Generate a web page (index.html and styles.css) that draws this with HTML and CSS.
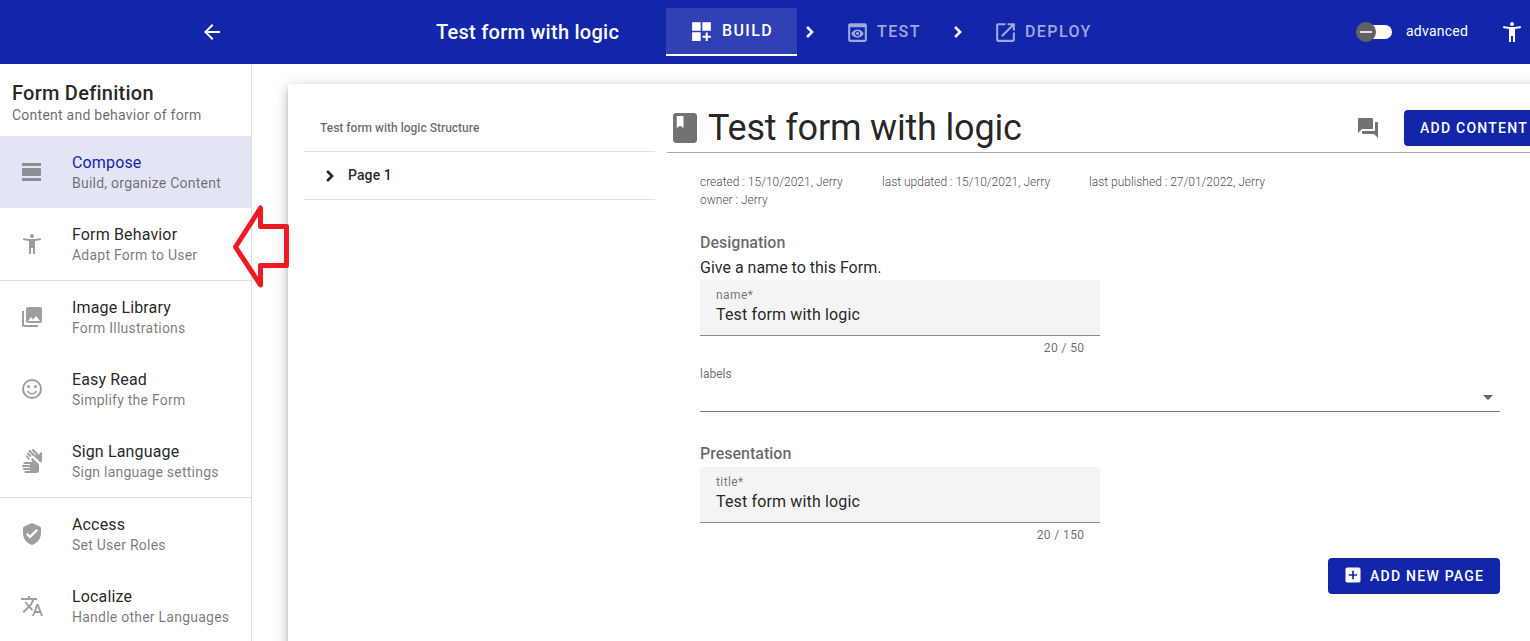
FILE: index.html
```html
<!DOCTYPE html>
<html lang="en">
<head>
<meta charset="utf-8">
<title>Test form with logic</title>
<link rel="stylesheet" href="styles.css">
</head>
<body>
<header class="topbar">
  <svg class="icon back" viewBox="0 0 24 24"><path d="M20 11H7.83l5.59-5.59L12 4l-8 8 8 8 1.41-1.41L7.83 13H20z"/></svg>
  <div class="topbar-title"><span class="t-top">Test form with logic</span></div>
  <nav class="steps">
    <div class="step active">
      <svg class="step-icon" viewBox="0 0 24 24"><path d="M3 3h8.200v8.200H3zM12.800 3H21v8.200h-8.200zM3 12.800h8.200V21H3zM18 13h-2v3h-3v2h3v3h2v-3h3v-2h-3z"/></svg><span>BUILD</span>
    </div>
    <svg class="step-sep" viewBox="0 0 24 24"><path d="M8.500 6l6 6-6 6" /></svg>
    <div class="step test">
      <svg class="step-icon" viewBox="0 0 24 24"><path fill-rule="evenodd" d="M19 3H5c-1.110 0-2 .9-2 2v14c0 1.100.89 2 2 2h14c1.100 0 2-.9 2-2V5c0-1.100-.89-2-2-2zm0 16H5V7h14v12zm-5.500-6c0 .83-.67 1.500-1.500 1.500s-1.500-.67-1.500-1.500.67-1.500 1.500-1.500 1.500.67 1.500 1.500zM12 9c-2.730 0-5.060 1.660-6 4 .94 2.340 3.270 4 6 4s5.060-1.660 6-4c-.94-2.340-3.270-4-6-4zm0 6.500c-1.380 0-2.500-1.120-2.500-2.500s1.120-2.500 2.500-2.500 2.500 1.120 2.500 2.500-1.120 2.500-2.500 2.500z"/></svg><span>TEST</span>
    </div>
    <svg class="step-sep" viewBox="0 0 24 24"><path d="M8.500 6l6 6-6 6" /></svg>
    <div class="step deploy">
      <svg class="step-icon" viewBox="0 0 24 24"><path d="M19 19H5V5h7V3H5c-1.110 0-2 .9-2 2v14c0 1.100.89 2 2 2h14c1.100 0 2-.9 2-2v-7h-2v7zM14 3v2h3.590l-9.830 9.830 1.410 1.410L19 6.410V10h2V3h-7z"/></svg><span>DEPLOY</span>
    </div>
  </nav>
  <div class="advanced">
    <svg class="switch" viewBox="0 0 38 22"><rect x="3" y="4" width="34" height="14" rx="7" fill="#fff"/><circle cx="11" cy="11" r="10" fill="#616161"/><path d="M5 11h12" stroke="#e0e0e0" stroke-width="2"/></svg>
    <span class="t-adv">advanced</span>
  </div>
  <svg class="icon access" viewBox="0 0 24 24"><path d="M20.500 6c-2.610.7-5.670 1-8.500 1s-5.890-.3-8.500-1L3 8c1.860.5 4 .83 6 1v13h2v-6h2v6h2V9c2-.17 4.140-.5 6-1l-.5-2zM12 6c1.100 0 2-.9 2-2s-.9-2-2-2-2 .9-2 2 .9 2 2 2z"/></svg>
</header>
<div class="body">
  <aside class="sidebar">
    <div class="side-head"><div class="side-title"><span>Form Definition</span></div><div class="side-sub">Content and behavior of form</div></div>
    <div class="item selected">
      <svg class="icon" viewBox="0 0 24 24"><path d="M2 21h19v-3H2v3zM20 8H3c-.55 0-1 .45-1 1v6c0 .55.45 1 1 1h17c.55 0 1-.45 1-1V9c0-.55-.45-1-1-1zM2 3v3h19V3H2z"/></svg>
      <div><div class="item-title">Compose</div><div class="item-sub">Build, organize Content</div></div>
    </div>
    <div class="item">
      <svg class="icon" viewBox="0 0 24 24"><path d="M20.500 6c-2.610.7-5.670 1-8.500 1s-5.890-.3-8.500-1L3 8c1.860.5 4 .83 6 1v13h2v-6h2v6h2V9c2-.17 4.140-.5 6-1l-.5-2zM12 6c1.100 0 2-.9 2-2s-.9-2-2-2-2 .9-2 2 .9 2 2 2z"/></svg>
      <div><div class="item-title">Form Behavior</div><div class="item-sub">Adapt Form to User</div></div>
    </div>
    <div class="rule"></div>
    <div class="item">
      <svg class="icon" viewBox="0 0 24 24"><path d="M22 16V4c0-1.100-.9-2-2-2H8c-1.100 0-2 .9-2 2v12c0 1.100.9 2 2 2h12c1.100 0 2-.9 2-2zm-11-4l2.030 2.710L16 11l4 5H8l3-4zM2 6v14c0 1.100.9 2 2 2h14v-2H4V6H2z"/></svg>
      <div><div class="item-title">Image Library</div><div class="item-sub">Form Illustrations</div></div>
    </div>
    <div class="item">
      <svg class="icon" viewBox="0 0 24 24"><circle cx="12" cy="12" r="9" fill="none" stroke="currentColor" stroke-width="2"/><circle cx="8.500" cy="9.500" r="1.500"/><circle cx="15.500" cy="9.500" r="1.500"/><path d="M12 16c-1.480 0-2.750-.81-3.450-2H6.880c.8 2.050 2.790 3.500 5.120 3.500s4.320-1.450 5.120-3.500h-1.670c-.7 1.190-1.970 2-3.450 2z"/></svg>
      <div><div class="item-title">Easy Read</div><div class="item-sub">Simplify the Form</div></div>
    </div>
    <div class="item">
      <svg class="icon" viewBox="0 0 24 24"><path d="M12.490 13l-.93-1.860c-.37-.74-.07-1.640.67-2.010l.26-.13 5.730 5.460c.5.47.78 1.130.78 1.810v5.230c0 1.380-1.120 2.500-2.500 2.500h-11c-.55 0-1-.45-1-1s.45-1 1-1H10v-1H4c-.55 0-1-.45-1-1s.45-1 1-1h6v-1H3c-.55 0-1-.45-1-1s.45-1 1-1h7v-1H4.500c-.55 0-1-.45-1-1s.45-1 1-1h7.990z"/><path d="M11.780 7.120c-.84.4-1.170.62-1.630 1.190l-2.700-2.850c-.38-.4-.36-1.030.04-1.410.4-.38 1.030-.36 1.410.04l2.880 3.030zM9.640 9.210c-.23.55-.3 1.750-.11 2.290L6.230 8.050c-.38-.4-.36-1.030.04-1.410.4-.38 1.030-.36 1.410.04l1.960 2.530zM20.330 13.910l.88-.83c.5-.47.79-1.130.79-1.820V3.350l-.27-.1c-.78-.28-1.640.12-1.920.9l-.71 1.960-5.500-5.800c-.38-.4-1.010-.42-1.410-.04-.4.38-.42 1.010-.04 1.410l3.790 3.990-.73.69-4.820-5.080c-.38-.4-1.010-.42-1.410-.04-.4.38-.42 1.010-.04 1.410l3.780 3.980.94.25 5.890 5.620c.38.36.63.83.78 1.360z"/></svg>
      <div><div class="item-title">Sign Language</div><div class="item-sub">Sign language settings</div></div>
    </div>
    <div class="rule"></div>
    <div class="item">
      <svg class="icon" viewBox="0 0 24 24"><path d="M11.300 1.310l-7 3.110C3.520 4.770 3 5.540 3 6.390V11c0 5.550 3.840 10.740 9 12 5.160-1.260 9-6.450 9-12V6.390c0-.85-.52-1.620-1.300-1.970l-7-3.110c-.44-.19-.96-.19-1.400 0zM10 16.500l-4-4 1.600-1.600 2.400 2.400 6.400-6.400L18 8.500z"/></svg>
      <div><div class="item-title">Access</div><div class="item-sub">Set User Roles</div></div>
    </div>
    <div class="item">
      <svg class="icon" viewBox="0 0 24 24"><path d="M12.870 15.070l-2.540-2.510.03-.03c1.740-1.940 2.980-4.170 3.710-6.530H17V4h-7V2H8v2H1v1.990h11.170C11.500 7.920 10.440 9.750 9 11.350 8.070 10.320 7.300 9.190 6.690 8h-2c.73 1.630 1.730 3.170 2.980 4.560l-5.090 5.020L4 19l5-5 3.110 3.110.76-2.040zM18.500 10h-2L12 22h2l1.120-3h4.750L21 22h2l-4.500-12zm-2.620 7l1.620-4.330L19.120 17h-3.240z"/></svg>
      <div><div class="item-title">Localize</div><div class="item-sub">Handle other Languages</div></div>
    </div>
  </aside>
  <main class="card">
    <section class="tree">
      <div class="tree-head"><span>Test form with logic Structure</span></div>
      <div class="tree-row"><svg class="tree-chev" viewBox="0 0 24 24"><path d="M8.500 6l6 6-6 6"/></svg><span>Page 1</span></div>
    </section>
    <section class="content">
      <div class="heading">
        <svg class="book" viewBox="0 0 24 24"><path d="M18 2H6c-1.100 0-2 .9-2 2v16c0 1.100.9 2 2 2h12c1.100 0 2-.9 2-2V4c0-1.100-.9-2-2-2zM6.500 4H11v8l-2.250-1.500L6.500 12V4z"/></svg>
        <h1><span>Test form with logic</span></h1>
        <svg class="icon chat" viewBox="0 0 24 24"><path d="M21 6h-2v9H6v2c0 .55.45 1 1 1h11l4 4V7c0-.55-.45-1-1-1zm-4 6V3c0-.55-.45-1-1-1H3c-.55 0-1 .45-1 1v14l4-4h10c.55 0 1-.45 1-1z"/></svg>
        <button class="btn add-content">ADD CONTENT</button>
      </div>
      <div class="form">
        <div class="meta"><span class="m1">created : 15/10/2021, Jerry</span><span class="m2">last updated : 15/10/2021, Jerry</span><span>last published : 27/01/2022, Jerry</span></div>
        <div class="meta">owner : Jerry</div>
        <div class="section-title designation">Designation</div>
        <div class="hint">Give a name to this Form.</div>
        <div class="field"><div class="label">name*</div><div class="value">Test form with logic</div></div>
        <div class="counter">20 / 50</div>
        <div class="labels"><span>labels</span><i class="caret"></i></div>
        <div class="section-title presentation">Presentation</div>
        <div class="field"><div class="label">title*</div><div class="value">Test form with logic</div></div>
        <div class="counter">20 / 150</div>
        <div class="actions"><button class="btn add-page"><svg class="plus" viewBox="0 0 24 24"><path d="M19 3H5c-1.110 0-2 .9-2 2v14c0 1.100.89 2 2 2h14c1.100 0 2-.9 2-2V5c0-1.100-.9-2-2-2zm-2 10h-4v4h-2v-4H7v-2h4V7h2v4h4v2z"/></svg>ADD NEW PAGE</button></div>
      </div>
    </section>
  </main>
</div>
<svg class="pointer" viewBox="0 0 60 88"><path d="M5.500 44L30.500 5v18.500h26v39h-26V82z" fill="none" stroke="#ed1c24" stroke-width="5" stroke-linejoin="round"/></svg>
</body>
</html>
```
FILE: styles.css
```css
* { box-sizing: border-box; }
body { margin: 0; width: 1530px; height: 641px; overflow: hidden; position: relative; background: #fff; color: rgba(0,0,0,.87); font-family: Roboto, sans-serif; }
svg { display: block; flex: none; fill: currentColor; }
.icon { width: 24px; height: 24px; }

.topbar { height: 64px; background: #1226aa; color: #fff; display: flex; align-items: center; overflow: hidden; }
.back { margin-left: 200px; }
.topbar-title { margin-left: 212px; width: 230px; font-size: 20px; font-weight: 500; line-height: 32px; letter-spacing: .27px; white-space: nowrap; }
.steps { display: flex; align-items: center; width: 466px; height: 48px; flex: none; }
.step { display: flex; align-items: center; height: 48px; font-size: 16px; font-weight: 500; line-height: 20px; letter-spacing: 1.4px; color: #a0a8dd; }
.step span { margin-left: 7px; }
.step-icon { width: 25px; height: 25px; }
.step.active { width: 131px; padding: 1px 0 0 23px; background: #2f40b4; border-bottom: 2px solid #fff; color: #fff; }
.step.active span { margin-left: 8px; }
.step.test { width: 75px; margin-left: 25px; }
.step.deploy { margin-left: 25px; }
.step-sep { width: 20px; height: 20px; margin-left: 3px; }
.step.test + .step-sep { margin-left: 28px; }
.step-sep path, .tree-chev path { fill: none; stroke: currentColor; stroke-width: 3; }
.step:not(.active) span, .step.active span { padding-bottom: 1px; }
.advanced { display: flex; align-items: center; margin-left: 223px; width: 125px; flex: none; font-size: 14px; line-height: 20px; letter-spacing: .25px; }
.switch { width: 38px; height: 22px; margin-right: 13px; }
.t-adv { padding-bottom: 2px; }
.access { margin-left: 20px; }

.body { display: flex; height: 577px; }
.sidebar { width: 252px; flex: none; border-right: 1px solid #dedede; overflow: hidden; }
.side-head { height: 72px; padding: 17px 12px 0; }
.side-title { font-size: 20px; font-weight: 500; line-height: 24px; letter-spacing: .25px; }
.side-sub { font-size: 14px; line-height: 20px; letter-spacing: .25px; color: rgba(0,0,0,.6); }
.item { height: 72px; display: flex; align-items: center; padding-left: 20px; white-space: nowrap; }
.item .icon { margin-right: 28px; color: rgba(0,0,0,.38); }
.item-title { padding-top: 2px; font-size: 16px; line-height: 20px; letter-spacing: .15px; }
.item-sub { font-size: 14px; line-height: 20px; letter-spacing: .24px; color: rgba(0,0,0,.54); }
.selected { background: #e3e5f4; }
.selected .item-title { color: #1226aa; }
.rule { height: 1px; background: #dedede; }

.card { margin: 20px 0 0 36px; width: 1300px; flex: none; height: 580px; display: flex; background: #fff; box-shadow: 0 3px 5px -1px rgba(0,0,0,.2), 0 6px 10px rgba(0,0,0,.14), 0 1px 18px rgba(0,0,0,.12); clip-path: inset(-20px -20px 0 -20px); }
.tree { width: 351px; margin-left: 16px; flex: none; }
.tree-head { height: 68px; padding: 34px 16px 0; font-size: 12px; line-height: 20px; font-weight: 500; color: rgba(0,0,0,.6); border-bottom: 1px solid #e0e0e0; }
.tree-row { height: 48px; display: flex; align-items: center; padding-left: 16px; font-size: 14px; font-weight: 500; letter-spacing: .1px; border-bottom: 1px solid #e0e0e0; }
.tree-row span { padding-bottom: 2px; }
.tree-chev { width: 20px; height: 20px; margin-right: 8px; }
.content { margin-left: 12px; width: 900px; }
.heading { height: 69px; padding-top: 19px; display: flex; align-items: center; border-bottom: 1px solid #a8a8a8; }
.book { width: 36px; height: 36px; color: #727272; }
h1 { margin: 0 0 0 5px; width: 648px; font-size: 36px; font-weight: 400; line-height: 40px; letter-spacing: -.18px; white-space: nowrap; }
.chat { color: #727272; }
.btn { height: 36px; border: 0; border-radius: 4px; background: #1226aa; color: #fff; padding: 0 16px; display: flex; align-items: center; font: 500 14px/36px Roboto, sans-serif; letter-spacing: 1.25px; white-space: nowrap; }
.add-content { margin-left: 24px; }
.add-page { width: 172px; padding: 0 0 0 15px; }
.form { margin-left: 33px; width: 800px; padding-top: 20px; }
.meta { display: flex; height: 18px; line-height: 18px; font-size: 12px; font-weight: 300; color: rgba(0,0,0,.75); white-space: nowrap; }
.m1 { width: 182px; }
.m2 { width: 207px; }
.section-title { font-size: 16px; line-height: 24px; font-weight: 500; color: rgba(0,0,0,.6); }
.designation { margin-top: 22px; }
.hint { font-size: 16px; line-height: 25px; }
.field { width: 400px; height: 56px; padding: 7px 16px 0; background: #f4f4f4; border-radius: 4px 4px 0 0; border-bottom: 1px solid #8a8a8a; }
.label { font-size: 12px; line-height: 16px; letter-spacing: .4px; color: rgba(0,0,0,.54); }
.value { font-size: 16px; line-height: 24px; letter-spacing: .15px; }
.counter { width: 384.500px; height: 24px; line-height: 24px; text-align: right; font-size: 12px; letter-spacing: .4px; color: rgba(0,0,0,.6); }
.labels { height: 52px; display: flex; justify-content: space-between; font-size: 12px; line-height: 28px; color: rgba(0,0,0,.6); border-bottom: 1px solid #757575; }
.caret { margin: 35px 7px 0 0; width: 0; height: 0; border: 5px solid transparent; border-top-color: #616161; border-bottom: 0; }
.presentation { margin-top: 29px; height: 26px; line-height: 26px; }
.actions { display: flex; justify-content: flex-end; padding-top: 11px; }
.plus { width: 20px; height: 20px; margin: 0 7px 2px 0; }

.pointer { position: absolute; left: 230px; top: 203px; width: 60px; height: 88px; }
```
